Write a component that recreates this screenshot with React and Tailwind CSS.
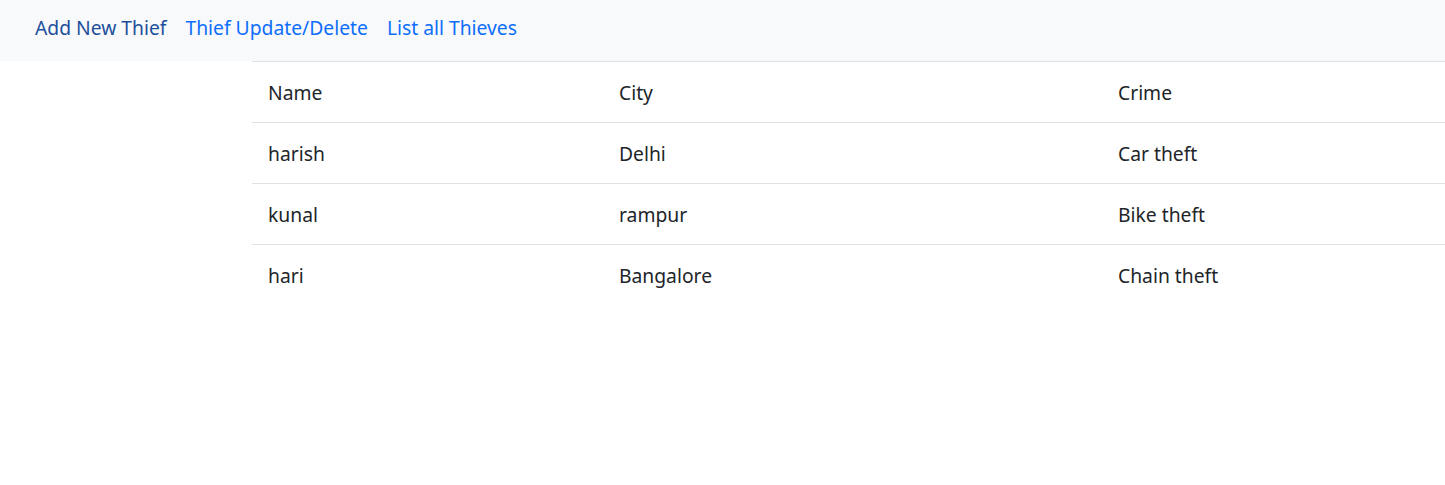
const rows = [
  { name: "harish", city: "Delhi", crime: "Car theft" },
  { name: "kunal", city: "rampur", crime: "Bike theft" },
  { name: "hari", city: "Bangalore", crime: "Chain theft" },
];

function Cell({ children }) {
  return <div className="px-4 pt-[16px] pb-[14px] leading-[30px]">{children}</div>;
}

export default function App() {
  return (
    <div className="min-h-screen bg-white text-[19.3px] text-[#212529] font-['Noto_Sans',sans-serif]">
      {/* navbar */}
      <nav className="h-[61px] bg-[#f8f9fa] flex items-center gap-[19px] pl-[35px] pb-[4px]">
        <a className="text-[#1d4f9c]">Add New Thief</a>
        <a className="text-[#0d6efd]">Thief Update/Delete</a>
        <a className="text-[#0d6efd]">List all Thieves</a>
      </nav>

      {/* table */}
      <div className="pl-[252px]">
        <div className="border-t border-[#dee2e6]">
          <div className="grid grid-cols-[351px_499px_1fr] border-b border-[#dee2e6]">
            <Cell>Name</Cell>
            <Cell>City</Cell>
            <Cell>Crime</Cell>
          </div>
          {rows.map((r, i) => (
            <div
              key={r.name}
              className={`grid grid-cols-[351px_499px_1fr] ${i < rows.length - 1 ? "border-b border-[#dee2e6]" : ""}`}
            >
              <Cell>{r.name}</Cell>
              <Cell>{r.city}</Cell>
              <Cell>{r.crime}</Cell>
            </div>
          ))}
        </div>
      </div>
    </div>
  );
}
